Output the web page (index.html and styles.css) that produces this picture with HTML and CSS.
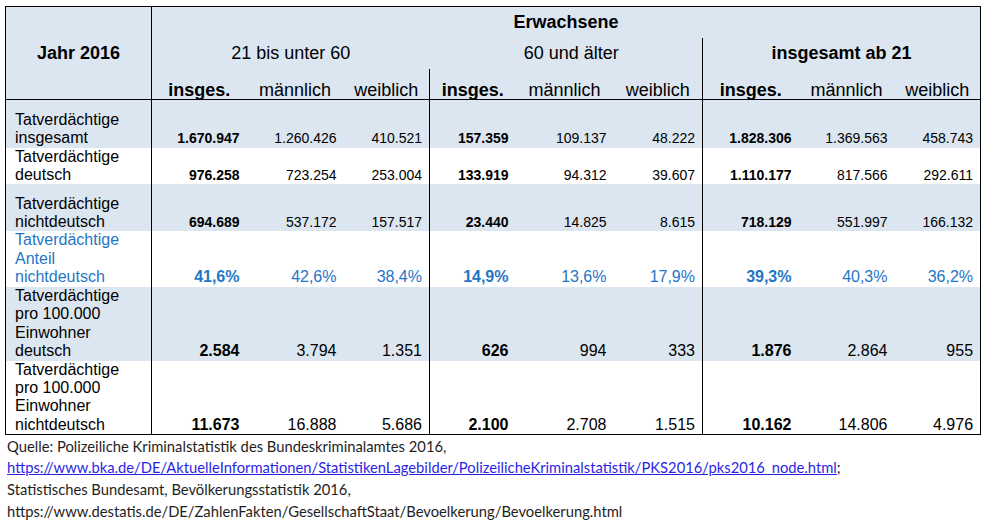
FILE: index.html
```html
<!DOCTYPE html>
<html lang="de">
<head>
<meta charset="utf-8">
<title>Tatverdächtige 2016</title>
<link rel="stylesheet" href="styles.css">
</head>
<body>
<table class="stats">
  <colgroup>
    <col class="c-label">
    <col class="c95"><col class="c97"><col class="c86">
    <col class="c86"><col class="c98"><col class="c89">
    <col class="c96"><col class="c96"><col class="c86">
  </colgroup>
  <thead>
    <tr class="h1">
      <th rowspan="3" class="year gr">Jahr 2016</th>
      <th colspan="9" class="bold">Erwachsene</th>
    </tr>
    <tr class="h2">
      <th colspan="3">21 bis unter 60</th>
      <th colspan="3" class="shift">60 und älter</th>
      <th colspan="3" class="bold gl">insgesamt ab 21</th>
    </tr>
    <tr class="h3">
      <th class="bold">insges.</th><th>männlich</th><th>weiblich</th>
      <th class="bold gl">insges.</th><th>männlich</th><th>weiblich</th>
      <th class="bold gl">insges.</th><th>männlich</th><th>weiblich</th>
    </tr>
  </thead>
  <tbody>
    <tr class="r1 shade sm">
      <td class="lab">Tatverdächtige<br>insgesamt</td>
      <td class="b">1.670.947</td><td>1.260.426</td><td>410.521</td>
      <td class="b gl">157.359</td><td>109.137</td><td>48.222</td>
      <td class="b gl">1.828.306</td><td>1.369.563</td><td>458.743</td>
    </tr>
    <tr class="r2 sm">
      <td class="lab">Tatverdächtige<br>deutsch</td>
      <td class="b">976.258</td><td>723.254</td><td>253.004</td>
      <td class="b gl">133.919</td><td>94.312</td><td>39.607</td>
      <td class="b gl">1.110.177</td><td>817.566</td><td>292.611</td>
    </tr>
    <tr class="r3 shade sm">
      <td class="lab">Tatverdächtige<br>nichtdeutsch</td>
      <td class="b">694.689</td><td>537.172</td><td>157.517</td>
      <td class="b gl">23.440</td><td>14.825</td><td>8.615</td>
      <td class="b gl">718.129</td><td>551.997</td><td>166.132</td>
    </tr>
    <tr class="r4 blue">
      <td class="lab">Tatverdächtige<br>Anteil<br>nichtdeutsch</td>
      <td class="b">41,6%</td><td>42,6%</td><td>38,4%</td>
      <td class="b gl">14,9%</td><td>13,6%</td><td>17,9%</td>
      <td class="b gl">39,3%</td><td>40,3%</td><td>36,2%</td>
    </tr>
    <tr class="r5 shade">
      <td class="lab">Tatverdächtige<br>pro 100.000<br>Einwohner<br>deutsch</td>
      <td class="b">2.584</td><td>3.794</td><td>1.351</td>
      <td class="b gl">626</td><td>994</td><td>333</td>
      <td class="b gl">1.876</td><td>2.864</td><td>955</td>
    </tr>
    <tr class="r6">
      <td class="lab">Tatverdächtige<br>pro 100.000<br>Einwohner<br>nichtdeutsch</td>
      <td class="b">11.673</td><td>16.888</td><td>5.686</td>
      <td class="b gl">2.100</td><td>2.708</td><td>1.515</td>
      <td class="b gl">10.162</td><td>14.806</td><td>4.976</td>
    </tr>
  </tbody>
</table>
<div class="sources">
  <p class="l1">Quelle: Polizeiliche Kriminalstatistik des Bundeskriminalamtes 2016,</p>
  <p class="l2"><a href="#">https://www.bka.de/DE/AktuelleInformationen/StatistikenLagebilder/PolizeilicheKriminalstatistik/PKS2016/pks2016_node.html</a>;</p>
  <p class="l3">Statistisches Bundesamt, Bevölkerungsstatistik 2016,</p>
  <p class="l4">https://www.destatis.de/DE/ZahlenFakten/GesellschaftStaat/Bevoelkerung/Bevoelkerung.html</p>
</div>
</body>
</html>
```
FILE: styles.css
```css
html, body {
  margin: 0;
  padding: 0;
  background: #ffffff;
}
body {
  padding: 6px 0 0 5px;
  font-family: "Liberation Sans", Arial, sans-serif;
  color: #000;
}
.stats {
  border-collapse: collapse;
  table-layout: fixed;
  width: 976px;
  border: 1px solid #000;
  font-size: 16px;
}
.c-label { width: 146px; }
.c95 { width: 95px; }
.c97 { width: 97px; }
.c86 { width: 86px; }
.c98 { width: 98px; }
.c89 { width: 89px; }
.c96 { width: 96px; }

.stats th, .stats td {
  padding: 0;
  border: none;
}
.stats thead th {
  background: #dce6f1;
  font-weight: normal;
  font-size: 18px;
  text-align: center;
  line-height: 21px;
}
.stats thead .bold { font-weight: bold; }
.stats thead .year { font-weight: bold; vertical-align: middle; }
.h1 { height: 31px; }
.h2 { height: 31px; }
.h3 { height: 31px; }
.h1 th { vertical-align: middle; padding-top: 1px; }
.h2 th { vertical-align: middle; }
.stats thead .h3 th {
  vertical-align: bottom;
  line-height: 18px;
  border-bottom: 1px solid #000;
}
.stats thead .year { border-bottom: 1px solid #000; }
.shift { padding-left: 11px !important; }

.gr { border-right: 1px solid #000 !important; }
.gl { border-left: 1px solid #000 !important; }

.stats tbody td {
  text-align: right;
  vertical-align: bottom;
  padding-right: 7px;
  line-height: 18.4px;
  white-space: nowrap;
}
.stats tbody td.lab {
  text-align: left;
  padding: 0 0 0 9px;
  border-right: 1px solid #000;
}
.stats tbody td.b { font-weight: bold; }
.sm td { font-size: 14px; }
.sm td.lab { font-size: 16px; }
.shade td { background: #dce6f1; }
.blue td { color: #1f76c6; }

.r1 { height: 48px; }
.r2 { height: 36px; }
.r3 { height: 47px; }
.r4 { height: 55px; }
.r5 { height: 74px; }
.r6 { height: 73px; }

.sources {
  font-family: Lato, "Noto Sans", sans-serif;
  font-size: 14.75px;
  color: #1e1e1e;
  padding-left: 2px;
}
.sources p {
  margin: 0;
  white-space: nowrap;
}
.l1 { line-height: 21px; padding-top: 1px; }
.l2 { line-height: 21px; }
.l3 { line-height: 23px; }
.l4 { line-height: 21px; }
.sources a {
  color: #2b1fe6;
  text-decoration: underline;
}
```
